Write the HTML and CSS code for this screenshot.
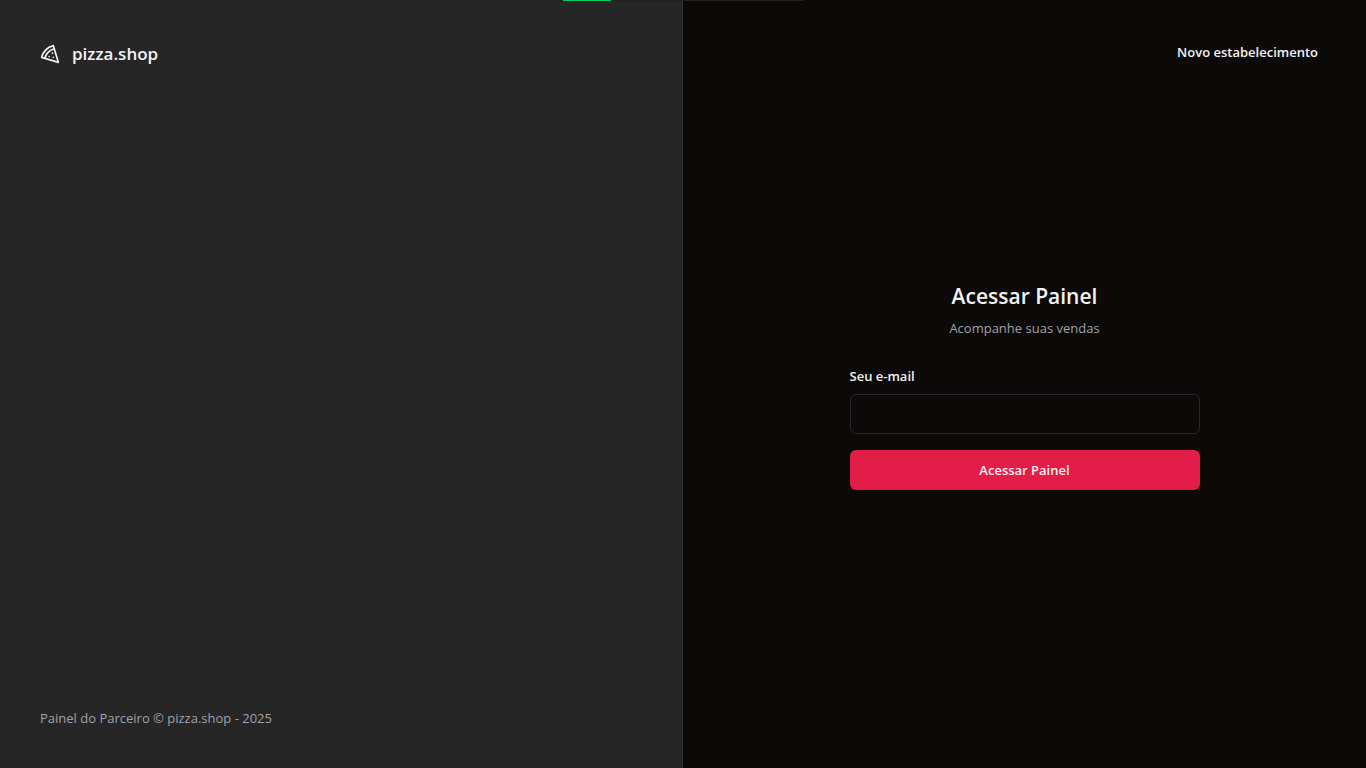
FILE: index.html
```html
<!DOCTYPE html>
<html lang="pt-BR">
<head>
<meta charset="utf-8">
<meta name="viewport" content="width=device-width, initial-scale=1">
<title>Login | pizza.shop</title>
<link rel="stylesheet" href="styles.css">
</head>
<body>
<div class="progress"><div class="progress-value"></div></div>
<div class="layout">
  <aside class="brand-panel">
    <div class="brand">
      <svg class="brand-icon" viewBox="0 0 24 24" fill="none" stroke="currentColor" stroke-width="2" stroke-linecap="round" stroke-linejoin="round" aria-hidden="true">
        <path d="M15 11h.01"/>
        <path d="M11 15h.01"/>
        <path d="M16 16h.01"/>
        <path d="m2 16 20 6-6-20A20 20 0 0 0 2 16"/>
        <path d="M5.71 17.11a17.04 17.04 0 0 1 11.4-11.4"/>
      </svg>
      <span>pizza.shop</span>
    </div>
    <footer class="copyright">Painel do Parceiro © pizza.shop - 2025</footer>
  </aside>
  <main class="content">
    <a class="signup-link" href="#">Novo estabelecimento</a>
    <section class="sign-in">
      <header class="sign-in-header">
        <h1>Acessar Painel</h1>
        <p>Acompanhe suas vendas</p>
      </header>
      <form class="form">
        <div class="field">
          <label for="email">Seu e-mail</label>
          <input id="email" type="email">
        </div>
        <button type="submit">Acessar Painel</button>
      </form>
    </section>
  </main>
</div>
</body>
</html>
```

FILE: styles.css
```css
*, *::before, *::after {
  box-sizing: border-box;
}

body {
  margin: 0;
  background: #0c0a09;
  color: #f2f2f2;
  font-family: "Segoe UI", "Open Sans", "Noto Sans", sans-serif;
  font-size: 13px;
  line-height: 20px;
}

.progress {
  position: absolute;
  top: 0;
  left: 50%;
  width: 241px;
  height: 1px;
  margin-left: -120px;
  background: #222120;
}

.progress-value {
  width: 20%;
  height: 100%;
  background: #00d062;
}

.layout {
  display: grid;
  grid-template-columns: 1fr 1fr;
  min-height: 100vh;
}

.brand-panel {
  display: flex;
  flex-direction: column;
  justify-content: space-between;
  padding: 40px;
  border-right: 1px solid #343434;
  background: #262626;
}

.brand {
  display: flex;
  align-items: center;
  gap: 12px;
  font-size: 17px;
  font-weight: 600;
  line-height: 28px;
}

.brand-icon {
  width: 20px;
  height: 20px;
}

.copyright {
  color: #a1a1aa;
}

.content {
  position: relative;
  display: flex;
  align-items: center;
  justify-content: center;
  padding: 32px;
}

.signup-link {
  position: absolute;
  top: 32px;
  right: 32px;
  padding: 10px 16px;
  color: inherit;
  font-weight: 600;
  text-decoration: none;
}

.sign-in {
  display: flex;
  flex-direction: column;
  gap: 28px;
  width: 350px;
  max-width: 100%;
}

.sign-in-header {
  display: flex;
  flex-direction: column;
  gap: 4px;
  text-align: center;
}

h1 {
  margin: 0;
  font-size: 21px;
  font-weight: 600;
  line-height: 36px;
}

p {
  margin: 0;
  color: #a1a1aa;
}

.form {
  display: flex;
  flex-direction: column;
  gap: 16px;
}

.field {
  display: flex;
  flex-direction: column;
  gap: 8px;
}

label {
  font-weight: 600;
}

input {
  width: 100%;
  height: 40px;
  padding: 8px 12px;
  border: 1px solid #292727;
  border-radius: 6px;
  background: #0c0a09;
  color: inherit;
  font: inherit;
}

button {
  height: 40px;
  border: 0;
  border-radius: 6px;
  background: #e11d48;
  color: #fff1f2;
  font: inherit;
  font-weight: 600;
}
```
